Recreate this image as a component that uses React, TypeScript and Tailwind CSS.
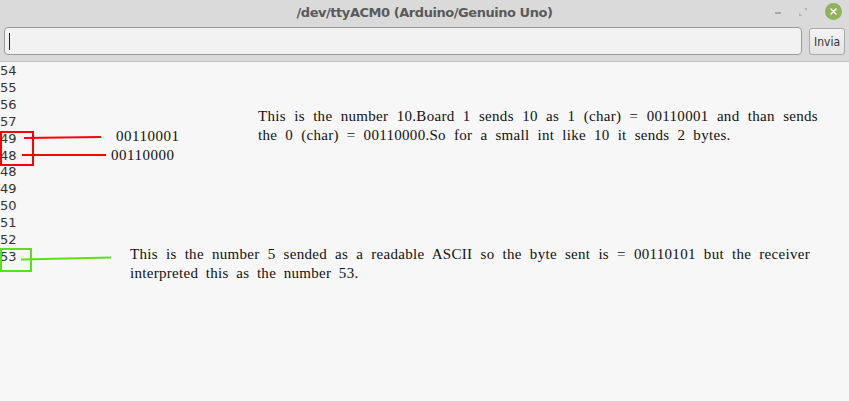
import React from 'react';

const lines = ['54', '55', '56', '57', '49', '48', '48', '49', '50', '51', '52', '53'];

const App: React.FC = () => {
  return (
    <div className="w-[849px] h-[401px] bg-[#f7f7f7] relative overflow-hidden font-['DejaVu_Sans',sans-serif]">
      {/* title bar */}
      <div className="h-[23px] bg-[#dadada] flex items-center justify-center relative">
        <span className="text-[13px] font-bold text-[#5a5a5a] tracking-[-0.45px] mt-[2px]">/dev/ttyACM0 (Arduino/Genuino Uno)</span>
        <div className="absolute right-[7px] top-[3px] flex items-center gap-[18px]">
          <div className="w-[6px] h-[2px] bg-[#a8a8a8] mt-[2px]" />
          <svg width="8" height="8" viewBox="0 0 8 8" className="mt-[1px]">
            <path d="M5 0h3v3zM3 8H0V5z" fill="#b0b0b0" />
          </svg>
          <div className="w-[17px] h-[17px] rounded-full bg-[#8db45a] flex items-center justify-center">
            <svg width="7" height="7" viewBox="0 0 7 7">
              <path d="M1 1l5 5M6 1l-5 5" stroke="#fff" strokeWidth="1.6" strokeLinecap="round" />
            </svg>
          </div>
        </div>
      </div>

      {/* input row */}
      <div className="h-[39px] bg-[#dadada] flex items-start gap-[7px] pl-[4px] pr-[4px] pt-[4px] border-b border-[#c4c4c4]">
        <div className="flex-1 h-[28px] rounded-[4px] border border-[#9a9a9a] bg-[#f2f2f2] flex items-center pl-[4px]">
          <div className="w-[1px] h-[17px] bg-[#222]" />
        </div>
        <button className="h-[27px] mt-[1px] w-[36px] rounded-[3px] border border-[#a9a9a9] bg-gradient-to-b from-[#f4f4f4] to-[#e4e4e4] text-[12px] text-[#333] font-['DejaVu_Sans_Condensed','DejaVu_Sans',sans-serif]">
          Invia
        </button>
      </div>

      {/* serial output */}
      <div className="flex flex-col pt-[1px] text-[13px] leading-[16.9px] text-[#333]">
        {lines.map((l, i) => (
          <div key={i}>{l}</div>
        ))}
      </div>

      {/* annotations */}
      <svg className="absolute left-0 top-0" width="849" height="401">
        <rect x="1" y="132" width="32" height="33" fill="none" stroke="#ff0000" strokeWidth="2" />
        <line x1="24" y1="138" x2="101" y2="137" stroke="#ff0000" strokeWidth="2" />
        <line x1="22" y1="155" x2="106" y2="155" stroke="#ff0000" strokeWidth="2" />
        <rect x="1" y="249" width="30" height="22" fill="none" stroke="#5be01a" strokeWidth="2" />
        <line x1="21" y1="259.5" x2="111" y2="257.5" stroke="#5be01a" strokeWidth="2" />
      </svg>

      <div className="absolute left-[116px] top-[128px] text-[15px] tracking-[0.5px] leading-[17px] text-[#111] font-['Liberation_Serif',serif]">00110001</div>
      <div className="absolute left-[111px] top-[147px] text-[15px] tracking-[0.5px] leading-[17px] text-[#111] font-['Liberation_Serif',serif]">00110000</div>

      <div className="absolute left-[258px] top-[107px] w-[560px] text-[15px] tracking-[0.3px] leading-[19px] text-[#111] font-['Liberation_Serif',serif]">
        <p className="text-justify [text-align-last:justify]">This is the number 10.Board 1 sends 10 as 1 (char) = 00110001 and than sends</p>
        <p className="[word-spacing:4px]">the 0 (char) = 00110000.So for a small int like 10 it sends 2 bytes.</p>
      </div>
      <div className="absolute left-[130px] top-[245px] w-[680px] text-[15px] tracking-[0.3px] leading-[19px] text-[#111] font-['Liberation_Serif',serif]">
        <p className="text-justify [text-align-last:justify]">This is the number 5 sended as a readable ASCII so the byte sent is = 00110101 but the receiver</p>
        <p className="[word-spacing:3.5px]">interpreted this as the number 53.</p>
      </div>
    </div>
  );
};

export default App;
